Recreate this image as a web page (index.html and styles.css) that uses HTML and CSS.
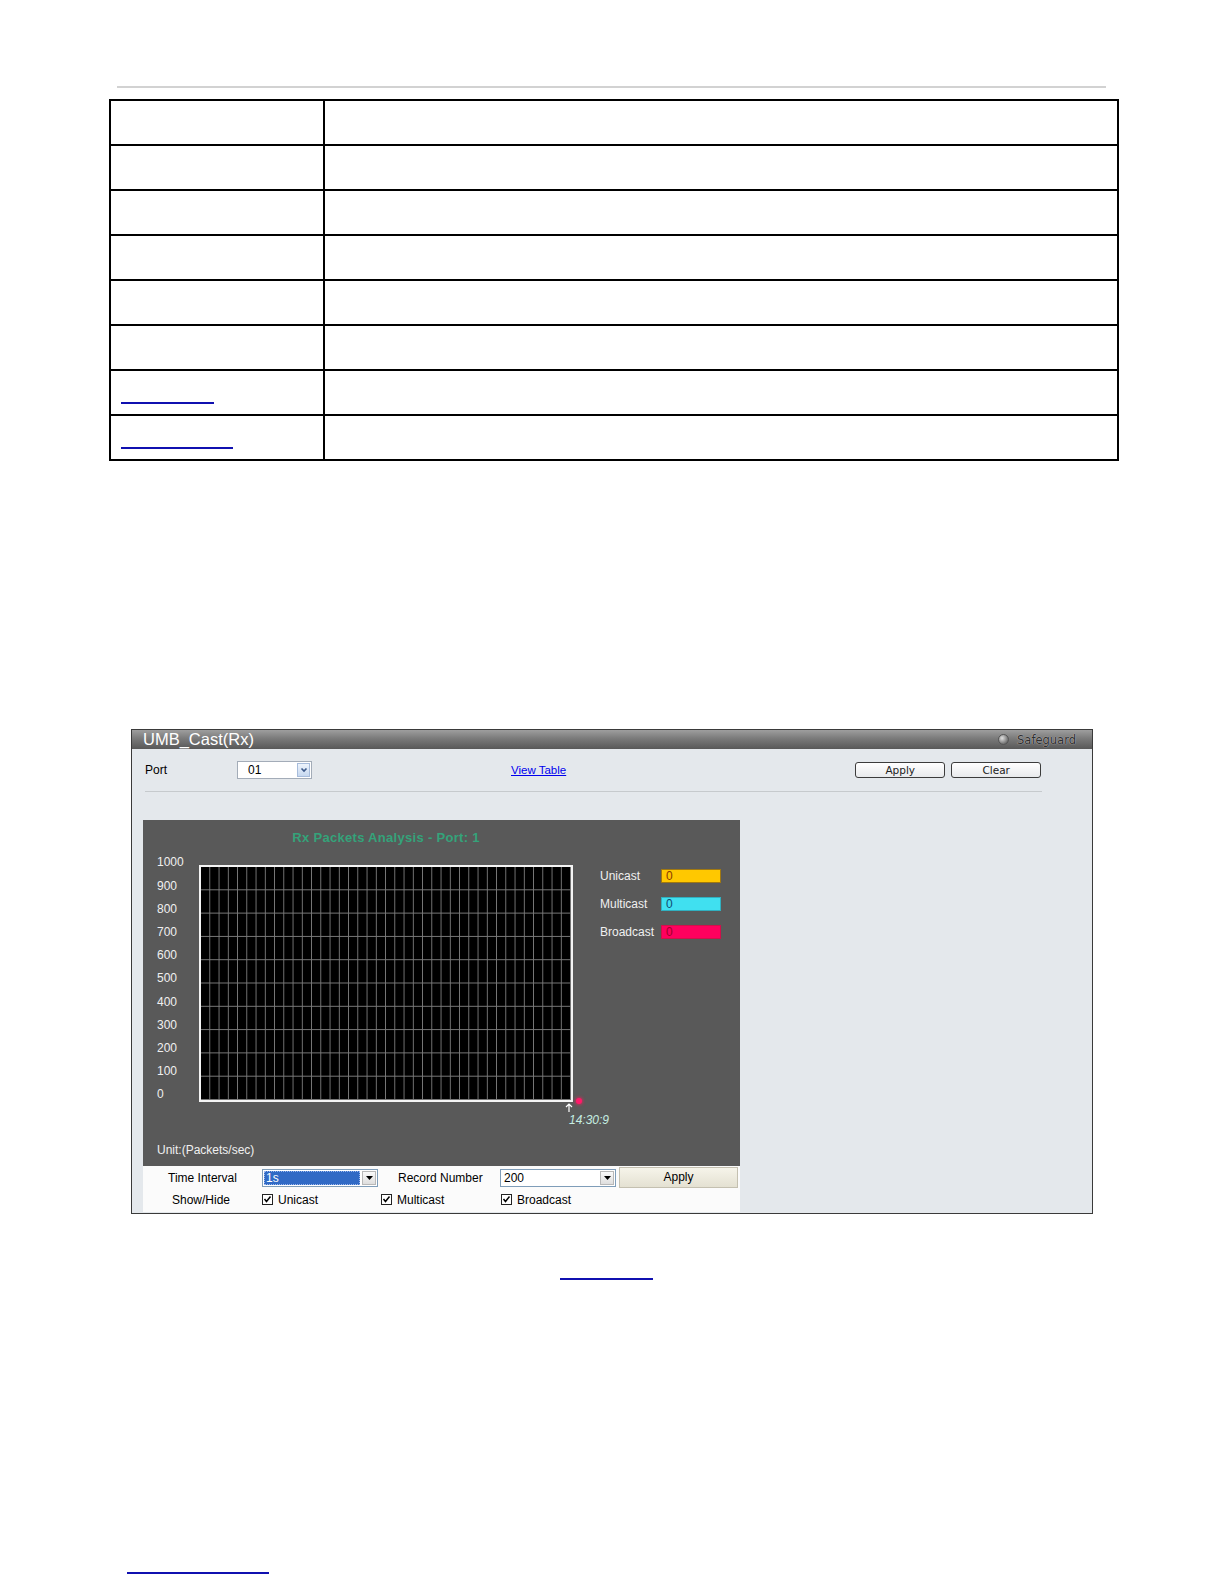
FILE: index.html
```html
<!DOCTYPE html>
<html>
<head>
<meta charset="utf-8">
<title>UMB_Cast(Rx)</title>
<link rel="stylesheet" href="styles.css">
</head>
<body>
<div class="page">
  <div class="top-rule"></div>
  <table class="params">
    <tr><td class="c1"></td><td class="c2"></td></tr>
    <tr><td class="c1"></td><td class="c2"></td></tr>
    <tr><td class="c1"></td><td class="c2"></td></tr>
    <tr><td class="c1"></td><td class="c2"></td></tr>
    <tr><td class="c1"></td><td class="c2"></td></tr>
    <tr><td class="c1"></td><td class="c2"></td></tr>
    <tr><td class="c1"><a class="ulink ul-a"></a></td><td class="c2"></td></tr>
    <tr><td class="c1"><a class="ulink ul-b"></a></td><td class="c2"></td></tr>
  </table>

  <div class="panel">
    <div class="titlebar">
      <span class="title">UMB_Cast(Rx)</span>
      <span class="safeguard"><span class="led"></span>Safeguard</span>
    </div>
    <div class="panel-body">
      <div class="toolbar">
        <span class="lbl-port">Port</span>
        <span class="vsel">
          <span class="vsel-val">01</span>
          <span class="vsel-btn"><svg width="10" height="10" viewBox="0 0 10 10"><path d="M2.5 3.5 L5 6 L7.5 3.5" fill="none" stroke="#3d5a8a" stroke-width="1.6"/></svg></span>
        </span>
        <a class="view-table">View Table</a>
        <span class="btns">
          <span class="rbtn">Apply</span>
          <span class="rbtn">Clear</span>
        </span>
      </div>
      <div class="sep"></div>

      <div class="chart-wrap">
        <div class="chart">
          <div class="chart-title">Rx Packets Analysis - Port: 1</div>
          <div class="yaxis">
            <span>1000</span><span>900</span><span>800</span><span>700</span><span>600</span><span>500</span><span>400</span><span>300</span><span>200</span><span>100</span><span>0</span>
          </div>
          <div class="plot">
            <svg class="mark-arrow" width="8" height="9" viewBox="0 0 8 9"><path d="M4 1 L4 9 M1 4 L4 1 L7 4" fill="none" stroke="#ffffff" stroke-width="1.2"/></svg>
            <span class="mark-dot"></span>
            <span class="mark-time">14:30:9</span>
          </div>
          <div class="legend">
            <div class="lrow"><span class="lname">Unicast</span><span class="lbox uni">0</span></div>
            <div class="lrow"><span class="lname">Multicast</span><span class="lbox multi">0</span></div>
            <div class="lrow"><span class="lname">Broadcast</span><span class="lbox broad">0</span></div>
          </div>
          <div class="unit">Unit:(Packets/sec)</div>
        </div>

        <div class="controls">
          <div class="crow">
            <span class="clbl w-ti">Time Interval</span>
            <span class="xsel">
              <span class="xsel-val hl"><span class="focus">1s</span></span>
              <span class="xsel-btn"><svg width="7" height="4" viewBox="0 0 7 4"><polygon points="0,0 7,0 3.5,4" fill="#000"/></svg></span>
            </span>
            <span class="clbl w-rn">Record Number</span>
            <span class="xsel">
              <span class="xsel-val">200</span>
              <span class="xsel-btn"><svg width="7" height="4" viewBox="0 0 7 4"><polygon points="0,0 7,0 3.5,4" fill="#000"/></svg></span>
            </span>
            <span class="xbtn">Apply</span>
          </div>
          <div class="crow">
            <span class="clbl w-sh">Show/Hide</span>
            <span class="chk w-u"><span class="cbox"><svg width="9" height="9" viewBox="0 0 9 9"><path d="M1.5 4 L3.5 6.5 L7.5 1.5" fill="none" stroke="#000" stroke-width="1.5"/></svg></span>Unicast</span>
            <span class="chk w-m"><span class="cbox"><svg width="9" height="9" viewBox="0 0 9 9"><path d="M1.5 4 L3.5 6.5 L7.5 1.5" fill="none" stroke="#000" stroke-width="1.5"/></svg></span>Multicast</span>
            <span class="chk"><span class="cbox"><svg width="9" height="9" viewBox="0 0 9 9"><path d="M1.5 4 L3.5 6.5 L7.5 1.5" fill="none" stroke="#000" stroke-width="1.5"/></svg></span>Broadcast</span>
          </div>
        </div>
      </div>
    </div>
  </div>

  <a class="ulink ul-mid"></a>
  <a class="ulink ul-bottom"></a>
</div>
</body>
</html>
```

FILE: styles.css
```css
html, body {
  margin: 0;
  padding: 0;
  background: #ffffff;
}
body {
  font-family: "Liberation Sans", Arial, sans-serif;
  font-size: 12px;
  color: #000;
}
.page {
  width: 1224px;
  height: 1584px;
  overflow: hidden;
}
.top-rule {
  margin: 86px 0 0 117px;
  width: 989px;
  height: 2px;
  background: #d2d2d2;
}
.params {
  margin: 11px 0 0 109px;
  width: 1010px;
  border-collapse: collapse;
}
.params td {
  border: 2px solid #000;
  height: 43px;
  padding: 0;
  vertical-align: top;
}
.params td.c1 {
  width: 212px;
}
.ulink {
  display: block;
  height: 0;
  border-bottom: 2px solid #1010b0;
}
.ul-a {
  width: 93px;
  margin: 31px 0 0 10px;
}
.ul-b {
  width: 112px;
  margin: 31px 0 0 10px;
}

/* panel */
.panel {
  margin: 268px 0 0 131px;
  width: 962px;
  height: 485px;
  border: 1px solid #3a3a3a;
  box-sizing: border-box;
  display: flex;
  flex-direction: column;
}
.titlebar {
  height: 19px;
  flex: none;
  display: flex;
  justify-content: space-between;
  align-items: center;
  background: linear-gradient(to bottom, #9e9e9e 0%, #7a7a7a 45%, #585858 100%);
}
.title {
  padding-left: 11px;
  font-size: 16.5px;
  line-height: 19px;
  color: #ffffff;
}
.safeguard {
  display: flex;
  align-items: center;
  padding-right: 16px;
  font-family: "DejaVu Sans", Verdana, sans-serif;
  font-size: 11.5px;
  color: #2e2e2e;
  text-shadow: 0 0 1px #bdbdbd, 0 0 1px #bdbdbd;
}
.led {
  width: 9px;
  height: 9px;
  border-radius: 50%;
  margin-right: 8px;
  background: radial-gradient(circle at 35% 35%, #e0e0e0 0%, #8a8a8a 55%, #444 100%);
  border: 1px solid #555;
}
.panel-body {
  flex: 1;
  background: #e4e8ec;
  padding: 12px 0 0 13px;
}
.toolbar {
  display: flex;
  align-items: center;
  height: 18px;
}
.lbl-port {
  width: 92px;
}
.vsel {
  width: 75px;
  height: 18px;
  box-sizing: border-box;
  border: 1px solid #a3acb8;
  background: #fff;
  display: flex;
  align-items: center;
  justify-content: space-between;
}
.vsel-val {
  padding-left: 10px;
}
.vsel-btn {
  width: 13px;
  height: 14px;
  margin-right: 1px;
  box-sizing: border-box;
  border: 1px solid #a7bcdb;
  background: linear-gradient(to bottom, #eef4fc, #c6d8f0);
  display: flex;
  align-items: center;
  justify-content: center;
}
.view-table {
  margin-left: 199px;
  color: #0000ee;
  text-decoration: underline;
  font-size: 11.5px;
}
.btns {
  margin-left: 289px;
  display: flex;
  gap: 6px;
}
.rbtn {
  width: 90px;
  height: 16px;
  box-sizing: border-box;
  border: 1px solid #3c3c3c;
  border-radius: 3px;
  background: linear-gradient(to bottom, #ffffff, #e8eaec);
  font-family: "DejaVu Sans", Verdana, sans-serif;
  font-size: 10.5px;
  line-height: 14px;
  text-align: center;
  color: #222;
}
.sep {
  margin-top: 12px;
  width: 897px;
  height: 1px;
  background: #c6cacd;
}

/* chart */
.chart-wrap {
  margin: 28px 0 0 -2px;
  width: 597px;
}
.chart {
  position: relative;
  height: 346px;
  background: #595959;
  display: grid;
  grid-template-columns: 56px 374px 1fr;
  grid-template-rows: 45px 237px auto;
  color: #f0f0f0;
}
.chart-title {
  grid-column: 2;
  grid-row: 1;
  padding-top: 11px;
  line-height: 14px;
  text-align: center;
  font-weight: bold;
  font-size: 13px;
  letter-spacing: 0.3px;
  color: #34a37a;
  white-space: nowrap;
}
.yaxis {
  grid-column: 1;
  grid-row: 2;
  margin-top: -13.6px;
  padding-left: 14px;
  display: flex;
  flex-direction: column;
}
.yaxis span {
  height: 23.2px;
  line-height: 23.2px;
}
.plot {
  grid-column: 2;
  grid-row: 2;
  position: relative;
  box-sizing: border-box;
  border: 2px solid #f4f4f4;
  background-color: #000;
  background-image:
    linear-gradient(to right, transparent calc(100% - 1px), #7a7a7a calc(100% - 1px)),
    linear-gradient(to bottom, transparent calc(100% - 1px), #7a7a7a calc(100% - 1px));
  background-size: 9.25px 100%, 100% 23.3px;
}
.mark-arrow {
  position: absolute;
  left: 364px;
  top: 236px;
}
.mark-dot {
  position: absolute;
  left: 375px;
  top: 231px;
  width: 6px;
  height: 6px;
  border-radius: 50%;
  background: #ff1a6a;
  box-shadow: 0 0 3px 1px #c0305a;
}
.mark-time {
  position: absolute;
  left: 368px;
  top: 246px;
  font-style: italic;
  line-height: 14px;
  color: #c6eee2;
  white-space: nowrap;
}
.legend {
  grid-column: 3;
  grid-row: 2;
  margin-top: -3px;
  padding-left: 27px;
}
.lrow {
  height: 28px;
  display: flex;
  align-items: center;
}
.lname {
  width: 61px;
}
.lbox {
  width: 60px;
  height: 14px;
  box-sizing: border-box;
  padding-left: 4px;
  line-height: 13px;
  font-size: 12px;
}
.uni {
  background: #ffc800;
  border: 1px solid #a07810;
  color: #8a3a00;
}
.multi {
  background: #40e0f0;
  border: 1px solid #30b0c0;
  color: #104a70;
}
.broad {
  background: #ff005e;
  border: 1px solid #d0104a;
  color: #a0002a;
}
.unit {
  grid-column: 1 / -1;
  grid-row: 3;
  padding: 41px 0 0 14px;
  line-height: 14px;
}

/* controls */
.controls {
  height: 46px;
  background: #fbfbfb;
  padding-top: 1px;
  box-sizing: border-box;
}
.crow {
  display: flex;
  align-items: center;
  height: 21px;
}
.crow + .crow {
  height: 23px;
}
.clbl {
  flex: none;
  white-space: nowrap;
  box-sizing: border-box;
}
.w-ti {
  width: 119px;
  padding-left: 25px;
}
.w-rn {
  width: 122px;
  padding-left: 20px;
}
.w-sh {
  width: 119px;
  padding-left: 29px;
}
.xsel {
  flex: none;
  width: 116px;
  height: 18px;
  box-sizing: border-box;
  border: 1px solid #7f9db9;
  background: #fff;
  display: flex;
  align-items: center;
  padding: 1px;
}
.xsel-val {
  flex: 1;
  height: 14px;
  line-height: 14px;
  padding-left: 2px;
}
.xsel-val.hl {
  margin-right: 2px;
  background: #316ac5;
  color: #fff;
  padding-left: 0;
}
.focus {
  display: block;
  height: 12px;
  line-height: 12px;
  border: 1px dotted #9ab8ee;
  padding-left: 1px;
}
.xsel-btn {
  width: 14px;
  height: 14px;
  box-sizing: border-box;
  border: 1px solid #b8b8b8;
  background: linear-gradient(to bottom, #fafafa, #dedede);
  display: flex;
  align-items: center;
  justify-content: center;
}
.xbtn {
  flex: none;
  margin-left: 3px;
  width: 119px;
  height: 21px;
  box-sizing: border-box;
  border: 1px solid #c4c0b0;
  background: linear-gradient(to bottom, #f6f4ea, #e4e1d2);
  text-align: center;
  line-height: 19px;
}
.chk {
  flex: none;
  display: flex;
  align-items: center;
}
.w-u {
  width: 119px;
}
.w-m {
  width: 120px;
}
.cbox {
  width: 11px;
  height: 11px;
  box-sizing: border-box;
  border: 1px solid #222;
  background: #fff;
  margin-right: 5px;
  display: flex;
  align-items: center;
  justify-content: center;
}

.ul-mid {
  width: 93px;
  margin: 64px 0 0 560px;
}
.ul-bottom {
  width: 142px;
  margin: 292px 0 0 127px;
}
```
